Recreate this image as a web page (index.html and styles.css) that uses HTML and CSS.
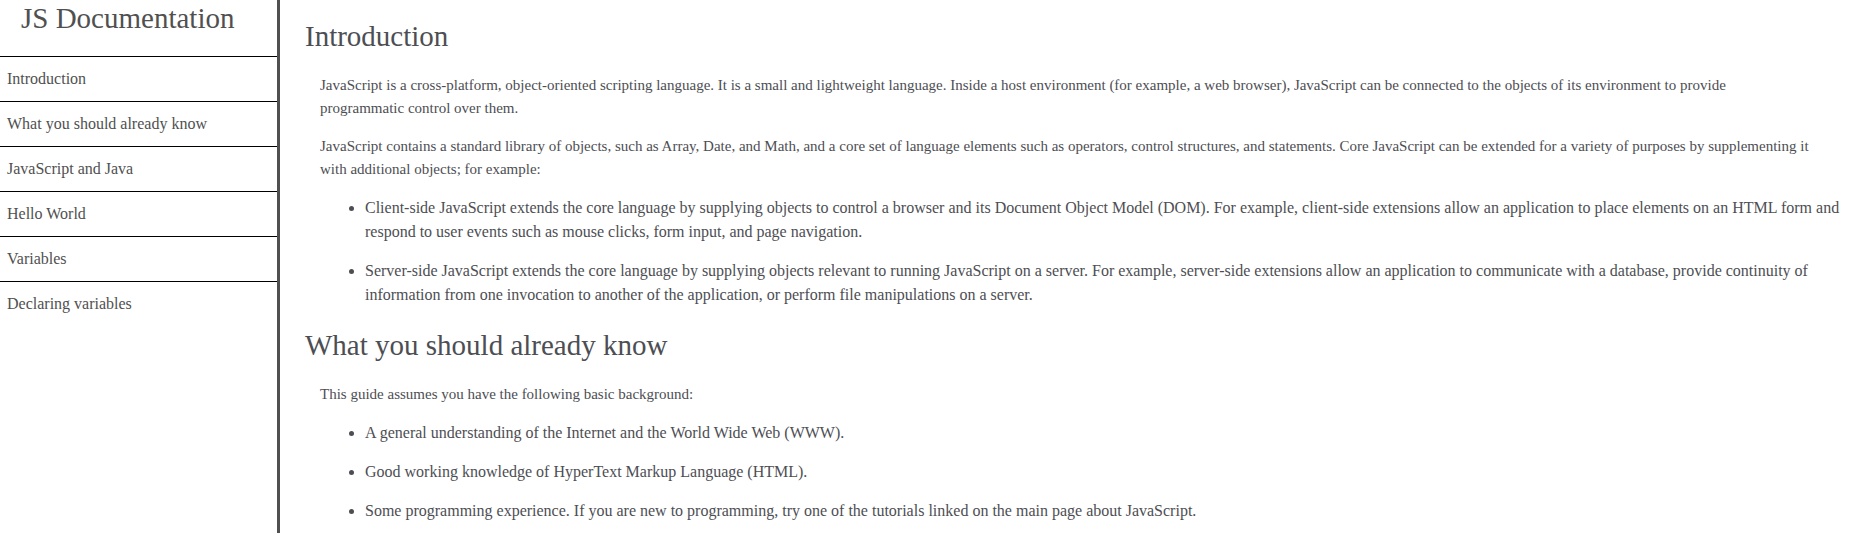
FILE: index.html
```html
<!DOCTYPE html>
<html lang="en">
<head>
<meta charset="utf-8">
<title>JS Documentation</title>
<link rel="stylesheet" href="styles.css">
</head>
<body>
<div class="layout">
<nav class="sidebar">
<header class="sidebar-title">JS Documentation</header>
<ul class="nav-list">
<li><a class="nav-link" href="#introduction">Introduction</a></li>
<li><a class="nav-link" href="#already-know">What you should already know</a></li>
<li><a class="nav-link" href="#java">JavaScript and Java</a></li>
<li><a class="nav-link" href="#hello">Hello World</a></li>
<li><a class="nav-link" href="#variables">Variables</a></li>
<li><a class="nav-link" href="#declaring">Declaring variables</a></li>
</ul>
</nav>
<main class="content">
<section class="topic" id="introduction">
<h2 class="topic-title">Introduction</h2>
<p class="text">JavaScript is a cross-platform, object-oriented scripting language. It is a small and lightweight language. Inside a host environment (for example, a web browser), JavaScript can be connected to the objects of its environment to provide programmatic control over them.</p>
<p class="text">JavaScript contains a standard library of objects, such as Array, Date, and Math, and a core set of language elements such as operators, control structures, and statements. Core JavaScript can be extended for a variety of purposes by supplementing it with additional objects; for example:</p>
<ul class="points">
<li class="point">Client-side JavaScript extends the core language by supplying objects to control a browser and its Document Object Model (DOM). For example, client-side extensions allow an application to place elements on an HTML form and respond to user events such as mouse clicks, form input, and page navigation.</li>
<li class="point">Server-side JavaScript extends the core language by supplying objects relevant to running JavaScript on a server. For example, server-side extensions allow an application to communicate with a database, provide continuity of information from one invocation to another of the application, or perform file manipulations on a server.</li>
</ul>
</section>
<section class="topic" id="already-know">
<h2 class="topic-title">What you should already know</h2>
<p class="text">This guide assumes you have the following basic background:</p>
<ul class="points">
<li class="point">A general understanding of the Internet and the World Wide Web (WWW).</li>
<li class="point">Good working knowledge of HyperText Markup Language (HTML).</li>
<li class="point">Some programming experience. If you are new to programming, try one of the tutorials linked on the main page about JavaScript.</li>
</ul>
</section>
</main>
</div>
</body>
</html>
```
FILE: styles.css
```css
body {
  margin: 0;
  background: #fff;
  color: #4d4e53;
  font-family: "Liberation Serif", "Times New Roman", serif;
}

.layout {
  display: flex;
  height: 100vh;
  overflow: hidden;
}

.sidebar {
  flex: 0 0 277px;
  border-right: 3px solid #505050;
  color: #505050;
}

.sidebar-title {
  margin: 0 0 19px 21px;
  font-size: 29px;
  line-height: 37px;
}

.nav-list {
  margin: 0;
  padding: 0;
  list-style: none;
}

.nav-link {
  display: block;
  padding: 12px 7px;
  border-top: 1px solid #000;
  color: inherit;
  font-size: 16px;
  line-height: 20px;
  text-decoration: none;
}

.content {
  flex: 1;
  min-width: 0;
  padding: 19px 8px 0 25px;
}

.topic {
  margin-bottom: 21px;
}

.topic-title {
  margin: 0 0 20px;
  font-size: 29px;
  font-weight: 400;
  line-height: 35px;
}

.text {
  margin: 0 34px 15px 15px;
  font-size: 15px;
  line-height: 23px;
}

.points {
  margin: 0;
  padding-left: 60px;
}

.point {
  font-size: 16px;
  line-height: 24px;
}

.point + .point {
  margin-top: 15px;
}
```
